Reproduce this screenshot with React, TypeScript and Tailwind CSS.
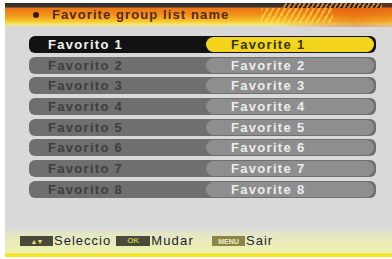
import React from 'react'

const ROWS = [1, 2, 3, 4, 5, 6, 7, 8]

const font = { fontFamily: '"Liberation Sans", Arial, sans-serif' }

function Row({ n, active }: { n: number; active: boolean }) {
  return (
    <div
      className={`h-[17px] rounded-[6px] flex items-stretch ${active ? 'bg-[#121212]' : 'bg-[#6f6f6f]'}`}
    >
      <div
        className={`w-[177px] shrink-0 pl-[19px] text-[13px] leading-[17px] font-bold tracking-[1.3px] ${active ? 'text-[#f4f4f4]' : 'text-[#3e3e3e]'}`}
      >
        Favorito {n}
      </div>
      <div
        className={`flex-1 my-[1px] mr-[2px] rounded-full pl-[25px] text-[13px] leading-[15px] font-bold tracking-[1.3px] ${active ? 'bg-[#f3d51e] text-[#3a3208]' : 'bg-[#8e8e8e] text-[#ececec]'}`}
      >
        Favorite {n}
      </div>
    </div>
  )
}

export default function App() {
  return (
    <div className="w-[392px] h-[259px] bg-white overflow-hidden pl-[5px] pt-[3px] flex flex-col" style={font}>
      {/* Header */}
      <header className="relative h-[24px] shrink-0 bg-[linear-gradient(to_bottom,#2c2c2c_0px,#3a3530_4px,#ec7416_5px,#f0941a_12px,#f6c42a_18px,#f3e46a_21px,#e2e0c8_24px)] flex items-center pl-[28px] pb-[1px]">
        <div className="absolute inset-0 bg-[linear-gradient(to_right,transparent_0%,transparent_70%,rgba(220,60,10,0.35)_90%,rgba(220,60,10,0.2)_100%)]" />
        <div className="absolute top-0 left-[278px] right-[10px] h-[5px] bg-[repeating-linear-gradient(120deg,#2c2c2c_0px,#2c2c2c_2px,#d0782a_2px,#d0782a_4px)]" />
        <div className="absolute top-[5px] left-[256px] w-[72px] h-[15px] bg-[repeating-linear-gradient(120deg,rgba(255,230,90,0.55)_0px,rgba(255,230,90,0.55)_2px,transparent_2px,transparent_5px)]" />
        <span className="relative w-[6px] h-[6px] rounded-full bg-[#3a1a08] mr-[13px]" />
        <span className="relative text-[13px] font-bold tracking-[1.1px] text-[#5a2810]">Favorite group list name</span>
      </header>

      {/* List */}
      <main className="flex-1 bg-[#d9d9d9] pt-[9px] pl-[24px] pr-[16px] flex flex-col gap-[3.7px]">
        {ROWS.map((n) => (
          <Row key={n} n={n} active={n === 1} />
        ))}
      </main>

      {/* Footer */}
      <footer className="h-[29px] shrink-0 mb-[2px] bg-[linear-gradient(to_bottom,#d9d9d9_0px,#e4e6c4_6px,#ecefb0_20px,#ecefb0_25px,#f3e51c_26px,#f3e51c_29px)] flex items-center pl-[15px] pb-[3px] text-[13px] text-[#1c1c3a]">
        <span className="w-[33px] h-[10px] bg-[#4a4a3a] flex items-center justify-center text-[7px] leading-none text-[#e8e070] tracking-[-1px]">
          ▲▼
        </span>
        <span className="ml-[1px] font-medium tracking-[1px]">Seleccio</span>
        <span className="ml-[5px] w-[34px] h-[10px] bg-[#4a4a3a] flex items-center justify-center text-[8px] leading-none font-bold text-[#c8c048]">
          OK
        </span>
        <span className="ml-[1px] font-medium tracking-[1.2px]">Mudar</span>
        <span className="ml-[18px] w-[33px] h-[10px] bg-[#8a8648] flex items-center justify-center text-[7px] leading-none font-bold text-[#f4f0c0]">
          MENU
        </span>
        <span className="ml-[1px] font-medium tracking-[1px]">Sair</span>
      </footer>
    </div>
  )
}
